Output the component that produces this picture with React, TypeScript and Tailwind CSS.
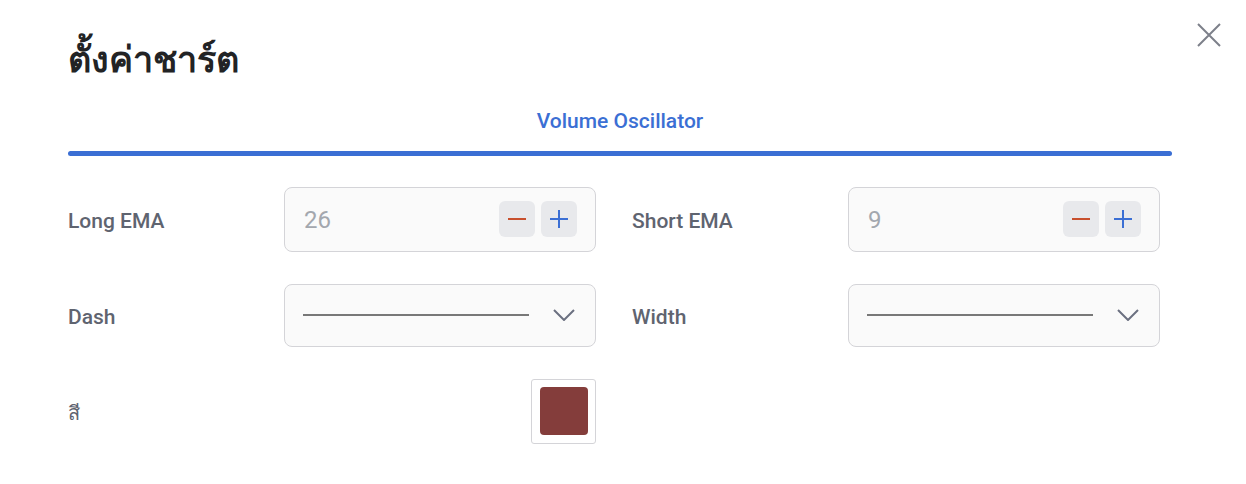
import { useState } from 'react'

function Stepper({ value }: { value: number }) {
  const [v, setV] = useState(value)
  return (
    <div className="flex h-[65px] w-[312px] items-center justify-between rounded-lg border border-[#d4d4d8] bg-[#fafafa] pl-[19px] pr-[18px]">
      <span className="mt-[2px] text-[24px] text-[#a3a7ae]">{v}</span>
      <div className="flex gap-[6px]">
        <button onClick={() => setV(v - 1)} className="flex h-[36px] w-[36px] items-center justify-center rounded-md bg-[#e8e9ec]">
          <svg width="22" height="22" viewBox="0 0 22 22">
            <path d="M2 11h18" stroke="#c8502e" strokeWidth="2" />
          </svg>
        </button>
        <button onClick={() => setV(v + 1)} className="flex h-[36px] w-[36px] items-center justify-center rounded-md bg-[#e8e9ec]">
          <svg width="22" height="22" viewBox="0 0 22 22">
            <path d="M2 11h18M11 2v18" stroke="#3b6fd4" strokeWidth="2" />
          </svg>
        </button>
      </div>
    </div>
  )
}

function LineSelect() {
  return (
    <div className="flex h-[63px] w-[312px] items-center rounded-lg border border-[#d4d4d8] bg-[#fafafa] pl-[18px] pr-[20px]">
      <div className="h-[2px] w-[226px] bg-[#787878]" />
      <svg className="ml-auto" width="22" height="12" viewBox="0 0 22 12">
        <path d="M1 1l10 10L21 1" fill="none" stroke="#6b7080" strokeWidth="2" />
      </svg>
    </div>
  )
}

function Field({ label, children }: { label: string; children: React.ReactNode }) {
  return (
    <div className="flex w-[528px] items-center">
      <div className="mt-[5px] w-[216px] text-[21px] font-medium text-[#5f6470]">{label}</div>
      {children}
    </div>
  )
}

export default function App() {
  return (
    <div className="relative h-[484px] w-[1246px] bg-white px-[68px] pt-[34px]" style={{ fontFamily: 'Roboto, "Noto Sans", sans-serif' }}>
      <button className="absolute right-[24px] top-[22px]">
        <svg width="26" height="26" viewBox="0 0 26 26">
          <path d="M2 2l22 22M24 2L2 24" stroke="#7d808a" strokeWidth="2" />
        </svg>
      </button>

      <h1 className="text-[36px] font-bold leading-[52px] text-[#222325]">ตั้งค่าชาร์ต</h1>

      <div className="mt-[20px] w-[1104px]">
        <div className="pb-[13px] text-center text-[21px] font-medium text-[#3b6fd4]">Volume Oscillator</div>
        <div className="h-[5px] rounded-full bg-[#3b6fd4]" />
      </div>

      <div className="mt-[31px] flex flex-col gap-[32px]">
        <div className="flex gap-[36px]">
          <Field label="Long EMA"><Stepper value={26} /></Field>
          <Field label="Short EMA"><Stepper value={9} /></Field>
        </div>
        <div className="flex gap-[36px]">
          <Field label="Dash"><LineSelect /></Field>
          <Field label="Width"><LineSelect /></Field>
        </div>
        <div className="flex w-[528px] items-center">
          <div className="mt-[4px] text-[20px] font-medium text-[#5f6470]">สี</div>
          <div className="ml-auto flex h-[65px] w-[65px] items-center justify-center rounded-[3px] border border-[#d4d4d8]">
            <div className="h-[48px] w-[48px] rounded-[4px] bg-[#843d3b]" />
          </div>
        </div>
      </div>
    </div>
  )
}
